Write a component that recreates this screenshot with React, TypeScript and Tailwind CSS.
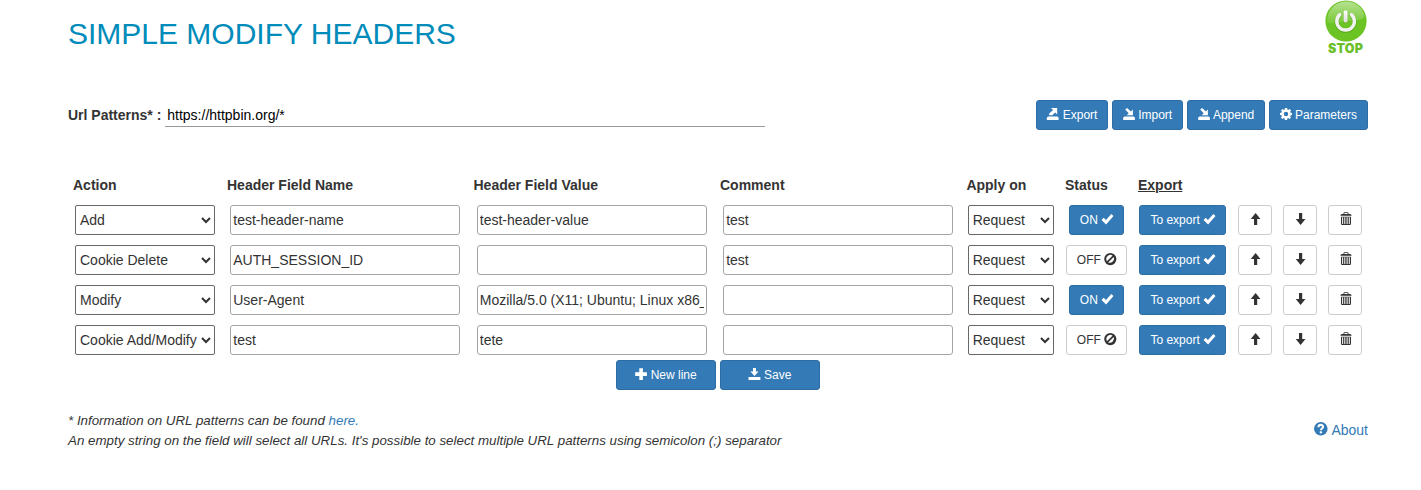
import React from "react";

type IconName =
  | "export" | "import" | "cog" | "ok" | "ban" | "up" | "down"
  | "trash" | "plus" | "save" | "question";

const shapes: Record<IconName, React.ReactNode> = {
  export: (
    <>
      <path d="M4 0H10.2V6.4L8.3 4.5L5.2 7.2H2.2V5.6L6.1 2.1Z" />
      <path d="M1.3 8.5H10.4L11.6 9.6V12H-.2V9.6Z" />
    </>
  ),
  import: (
    <>
      <path d="M2.2 1.5L4.1 0L7.9 3.4L9.9 1.4V7.3H3.7L5.7 5.3Z" />
      <path d="M1.5 8.5H10.6L11.9 9.6V12H.2V9.6Z" />
    </>
  ),
  cog: (
    <path
      fillRule="evenodd"
      d="M4.9 0H7.1L7.4 1.6L8.3 2L9.6 1L11.1 2.5L10.1 3.8L10.5 4.7L12 4.9V7.1L10.5 7.4L10.1 8.3L11 9.6L9.5 11.1L8.2 10.1L7.3 10.5L7.1 12H4.9L4.6 10.5L3.7 10.1L2.5 11L.9 9.5L1.9 8.2L1.5 7.3L0 7.1V4.9L1.5 4.6L1.9 3.7L1 2.5L2.5 .9L3.8 1.9L4.7 1.5ZM6 3.8A2.2 2.2 0 1 0 6 8.2A2.2 2.2 0 1 0 6 3.8Z"
    />
  ),
  ok: <path d="M.5 7L2.7 4.8L5 7L10.3 1L12.5 3.1L5.1 11.6Z" />,
  ban: (
    <path
      fillRule="evenodd"
      d="M6.3 0A6.1 6.1 0 1 1 6.3 12.2A6.1 6.1 0 1 1 6.3 0ZM6.3 1.8A4.3 4.3 0 0 0 2.9 8.3L8.5 2.7A4.3 4.3 0 0 0 6.3 1.8ZM9.7 3.9L4.1 9.5A4.3 4.3 0 0 0 9.7 3.9Z"
    />
  ),
  up: <path d="M6.6 0L11.5 6H8.2V12H5V6H1.7Z" />,
  down: <path d="M5 0H8.2V6H11.5L6.6 12L1.7 6H5Z" />,
  trash: (
    <>
      <path
        fillRule="evenodd"
        d="M4.5 1V0L5.2-.8H8.8L9.5 0V1H11.4L12.5 1.9V2.8H1.5V1.9L2.6 1ZM5.4 .1V1H8.6V.1Z"
      />
      <path
        fillRule="evenodd"
        d="M2 3.7H12V11.3L11.2 12H2.8L2 11.3ZM3.1 4.3V11.1H4.1V4.3ZM5.3 4.3V11.1H6.3V4.3ZM7.6 4.3V11.1H8.6V4.3ZM9.8 4.3V11.1H10.8V4.3Z"
      />
    </>
  ),
  plus: <path d="M4.3 .3H7.9V4.3H11.9V7.9H7.9V11.9H4.3V7.9H.2V4.3H4.3Z" />,
  save: (
    <>
      <path d="M4 0H6.9V3.6H9.6L5.5 8.1L1.4 3.6H4Z" />
      <path d="M-.5 9H11.4V12H-.5Z" />
    </>
  ),
  question: (
    <>
      <circle cx="6" cy="6" r="6" />
      <path d="M3.9 4.6C3.9 1.9 8 1.9 8 4.3C8 5.8 6.1 5.7 6.1 7.3" fill="none" stroke="#fff" strokeWidth="1.8" />
      <path d="M5.1 8.2H7.1V10H5.1Z" fill="#fff" />
    </>
  ),
};

function Icon({ name, className = "mb-[2px] size-3" }: { name: IconName; className?: string }) {
  return (
    <svg viewBox="0 0 12 12" fill="currentColor" overflow="visible" className={`shrink-0 ${className}`}>
      {shapes[name]}
    </svg>
  );
}

function Button({
  primary,
  className = "",
  children,
}: {
  primary?: boolean;
  className?: string;
  children: React.ReactNode;
}) {
  const tone = primary
    ? "border-[#2e6da4] bg-[#337ab7] text-white"
    : "border-[#ccc] bg-white text-[#333]";
  return (
    <button
      className={`flex h-[30px] items-center justify-center gap-[3.33px] whitespace-nowrap rounded-[3px] border px-[10px] text-xs leading-[18px] ${tone} ${className}`}
    >
      {children}
    </button>
  );
}

const columns =
  "grid grid-cols-[154px_246.5px_246.5px_246.4px_98.6px_73px_99.5px_45px_45px_45.5px]";

function Select({ value, className }: { value: string; className: string }) {
  return (
    <select
      defaultValue={value}
      className={`h-[30px] rounded-[2px] border border-[#686868] bg-white text-sm text-[#333] ${className}`}
    >
      <option>{value}</option>
    </select>
  );
}

function Field({ value }: { value: string }) {
  return (
    <input
      defaultValue={value}
      className="h-[30px] w-[230px] rounded-[3px] border border-[#a5a5a5] bg-white px-[2px] text-sm text-[#333]"
    />
  );
}

const rows = [
  { action: "Add", name: "test-header-name", value: "test-header-value", comment: "test", on: true },
  { action: "Cookie Delete", name: "AUTH_SESSION_ID", value: "", comment: "test", on: false },
  {
    action: "Modify",
    name: "User-Agent",
    value: "Mozilla/5.0 (X11; Ubuntu; Linux x86_64; rv:60.0) Gecko/20100101 Firefox/60.0",
    comment: "",
    on: true,
  },
  { action: "Cookie Add/Modify", name: "test", value: "tete", comment: "", on: false },
];

function StopButton() {
  return (
    <button className="mr-[1px] flex w-[43px] flex-col items-center">
      <svg viewBox="0 0 42 42" className="size-[42px]">
        <defs>
          <linearGradient id="gloss" x1="0" y1="0" x2="0" y2="1">
            <stop offset="0" stopColor="#fff" stopOpacity="0.5" />
            <stop offset="1" stopColor="#fff" stopOpacity="0.08" />
          </linearGradient>
          <linearGradient id="metal" x1="0" y1="0" x2="0" y2="1">
            <stop offset="0" stopColor="#fff" />
            <stop offset="1" stopColor="#dedede" />
          </linearGradient>
        </defs>
        <circle cx="21" cy="21" r="20.6" fill="#6cc424" />
        <path d="M21 1.5C31 1.5 38.5 8 39.6 17C33 23 24 19 15 22C9 24 5 24 2.5 22C1.5 11 10 1.5 21 1.5Z" fill="url(#gloss)" />
        <g fill="none" strokeLinecap="round">
          <path d="M14.8 14.6A8.8 8.8 0 1 0 26.4 14.6M20.6 12V20.5" stroke="#4c8f16" strokeOpacity="0.5" strokeWidth="4.4" transform="translate(0 .6)" />
          <path d="M14.8 14.6A8.8 8.8 0 1 0 26.4 14.6" stroke="#f2f2f2" strokeWidth="3.4" />
        </g>
        <rect x="18.6" y="10.4" width="4" height="12" rx="1.3" fill="url(#metal)" />
      </svg>
      <span className="mt-[1px] font-['Inter'] text-[12.5px] font-black leading-[12px] tracking-[0.2px] text-[#6cbf2a]">
        STOP
      </span>
    </button>
  );
}

export default function App() {
  return (
    <main className="h-[490px] w-full overflow-hidden bg-white pl-[68px] font-['Liberation_Sans',Arial,sans-serif] text-sm leading-5 text-[#333]">
      <div className="w-[1300px]">
        <header className="flex h-[100px] items-start justify-between">
          <h1 className="mt-[17px] text-[30px] leading-[33px] text-[#008cba]">SIMPLE MODIFY HEADERS</h1>
          <StopButton />
        </header>

        <section className="flex h-[75px] items-start justify-between">
          <label className="flex items-center gap-[3.9px]">
            <span className="pt-[2px] font-bold">Url Patterns* :</span>
            <input
              defaultValue="https://httpbin.org/*"
              className="mt-[3px] h-6 w-[600px] border-b border-[#999] px-[2px] pt-[1px] text-sm text-black"
            />
          </label>
          <div className="flex gap-[3.4px]">
            <Button primary><Icon name="export" />Export</Button>
            <Button primary><Icon name="import" />Import</Button>
            <Button primary><Icon name="import" />Append</Button>
            <Button primary><Icon name="cog" />Parameters</Button>
          </div>
        </section>

        <section>
          <div className={`${columns} h-[30px] font-bold [&>span]:px-[5px]`}>
            <span>Action</span>
            <span>Header Field Name</span>
            <span>Header Field Value</span>
            <span>Comment</span>
            <span>Apply on</span>
            <span>Status</span>
            <span className="underline">Export</span>
          </div>
          {rows.map((row) => (
            <div key={row.action} className={`${columns} mb-[10px] h-[30px] justify-items-center last:mb-0`}>
              <Select value={row.action} className="w-[140px]" />
              <Field value={row.name} />
              <Field value={row.value} />
              <Field value={row.comment} />
              <Select value="Request" className="w-[86px]" />
              <Button primary={row.on}>
                {row.on ? "ON" : "OFF"}
                <Icon name={row.on ? "ok" : "ban"} />
              </Button>
              <Button primary>To export<Icon name="ok" /></Button>
              <Button><Icon name="up" /></Button>
              <Button><Icon name="down" /></Button>
              <Button><Icon name="trash" /></Button>
            </div>
          ))}
        </section>

        <div className="mt-[5px] flex justify-center gap-1">
          <Button primary className="w-[100px]"><Icon name="plus" />New line</Button>
          <Button primary className="w-[100px]"><Icon name="save" />Save</Button>
        </div>

        <footer className="mt-5 flex items-center justify-between">
          <p className="pt-[1px] text-[13.33px] italic leading-5">
            * Information on URL patterns can be found <a className="text-[#337ab7]">here.</a>
            <br />
            An empty string on the field will select all URLs. It's possible to select multiple URL patterns using semicolon (;) separator
          </p>
          <a className="mb-[2px] flex items-center gap-[3.7px] text-[#337ab7]">
            <Icon name="question" className="mb-[1px] size-[13.6px]" />
            About
          </a>
        </footer>
      </div>
    </main>
  );
}
